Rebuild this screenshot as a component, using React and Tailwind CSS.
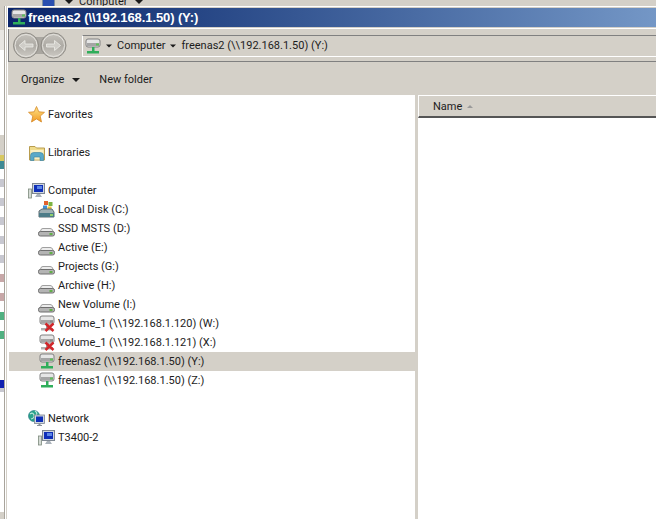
import React from "react";

const ui = "font-['Roboto','Liberation_Sans',sans-serif]";

function DriveIcon() {
  return (
    <svg width="17" height="16" viewBox="0 0 17 16" className="shrink-0 mt-[2px]">
      <path d="M3 8 Q3 6.500 5 6.500 H12 Q14 6.500 14.500 8 L15.500 11 H1.500 Z" fill="#ececec" stroke="#a0a0a0" />
      <rect x="0.500" y="9.500" width="16" height="4.500" rx="1.800" fill="#b4b4b4" stroke="#6f6f6f" />
      <rect x="11.500" y="11" width="3" height="2" fill="#62b04a" />
    </svg>
  );
}

function SystemDriveIcon() {
  return (
    <svg width="17" height="18" viewBox="0 0 17 18" className="shrink-0">
      <rect x="6" y="0" width="4" height="4" fill="#e2622e" />
      <rect x="10.500" y="1" width="4" height="4" fill="#7cb342" />
      <rect x="5" y="4.500" width="4" height="4" fill="#3f8fd6" />
      <rect x="9.500" y="5.500" width="4" height="4" fill="#f2c230" />
      <path d="M1 10 L4 8 H14 L16 11 V16 H1 Z" fill="#9fb0b4" stroke="#5c6a70" />
      <rect x="1" y="12" width="15" height="4" fill="#4d7c88" />
      <rect x="12" y="13" width="3" height="2" fill="#8fd06a" />
    </svg>
  );
}

function NetDriveIcon({ offline }) {
  return (
    <svg width="18" height="17" viewBox="0 0 18 17" className="shrink-0">
      <path d="M2 3 Q2 1 4 1 H14 Q16 1 16 3 V7 Q16 9 14 9 H4 Q2 9 2 7 Z" fill="#e6e6e6" stroke="#808080" />
      <rect x="3" y="5" width="12" height="3" fill="#a5a5a5" />
      <rect x="12" y="5.500" width="3" height="2" fill={offline ? "#8a8a8a" : "#5fbf5a"} />
      <rect x="8" y="9" width="2.500" height="4" fill={offline ? "#9a9a9a" : "#2fae5b"} />
      <rect x="3" y="13" width="12" height="2.500" fill={offline ? "#b0b0b0" : "#2fae5b"} />
      {offline && (
        <path d="M7.500 8.500 L15.500 16 M15.500 8.500 L7.500 16" stroke="#d2262a" strokeWidth="2.400" />
      )}
    </svg>
  );
}

function StarIcon() {
  return (
    <svg width="17" height="17" viewBox="0 0 17 17" className="shrink-0">
      <defs>
        <linearGradient id="star" x1="0" y1="0" x2="0" y2="1">
          <stop offset="0" stopColor="#fde58a" />
          <stop offset="1" stopColor="#f39a22" />
        </linearGradient>
      </defs>
      <path d="M8.500 0.500 L10.800 5.800 L16.500 6.300 L12.200 10.100 L13.500 16 L8.500 12.900 L3.500 16 L4.800 10.100 L0.500 6.300 L6.200 5.800 Z" fill="url(#star)" stroke="#d58a2a" strokeWidth="0.800" />
    </svg>
  );
}

function LibraryIcon() {
  return (
    <svg width="16" height="16" viewBox="0 0 16 16" className="shrink-0">
      <path d="M0.500 1.500 H6 L7.500 3 H15.500 V15 H0.500 Z" fill="#f0dc8c" stroke="#b89c4e" />
      <path d="M1.500 5 H14.500 V14.500 H1.500 Z" fill="#f8efc4" />
      <path d="M1.500 15.500 V10.500 Q1.500 7.500 5 7.500 H11 Q14.500 7.500 14.500 10.500 V15.500 H11 V12 H5 V15.500 Z" fill="#59a8c8" stroke="#357f9e" strokeWidth="0.600" />
    </svg>
  );
}

function ComputerIcon() {
  return (
    <svg width="17" height="16" viewBox="0 0 17 16" className="shrink-0">
      <rect x="0.500" y="6" width="3" height="9" fill="#d5dbd5" stroke="#7d8a7d" strokeWidth="0.800" />
      <rect x="4.500" y="0.500" width="12" height="10" fill="#cfd6df" stroke="#7e8792" />
      <rect x="6" y="2" width="9" height="7" fill="#0f2fb8" />
      <rect x="9" y="3" width="5" height="3" fill="#5c86e6" />
      <path d="M9 11 H12 L14 14 H7 Z" fill="#aab2ba" />
    </svg>
  );
}

function NetworkIcon() {
  return (
    <svg width="17" height="17" viewBox="0 0 17 17" className="shrink-0">
      <circle cx="6" cy="6" r="5.500" fill="#2aa38c" stroke="#1c6f7c" strokeWidth="0.600" />
      <path d="M2 4 Q5 2 6 5 T3 9 M7 1 Q10 3 8 5" fill="none" stroke="#bfe8dc" strokeWidth="1.200" />
      <rect x="6.500" y="5" width="10" height="8.500" fill="#cfd6df" stroke="#7e8792" strokeWidth="0.800" />
      <rect x="8" y="6.500" width="7" height="5.500" fill="#0f2fb8" />
      <path d="M10.500 13.500 H12.500 V15 H14 V16 H9 V15 H10.500 Z" fill="#8a929a" />
    </svg>
  );
}

function Caret({ className }) {
  return <span className={"w-0 h-0 border-x-4 border-x-transparent border-t-4 border-t-[#1a1a1a] " + className} />;
}

function NavButtons() {
  return (
    <svg width="54" height="27" viewBox="0 0 54 27" className="shrink-0">
      <defs>
        <linearGradient id="nav" x1="0" y1="0" x2="0" y2="1">
          <stop offset="0" stopColor="#c6c3bd" />
          <stop offset="0.500" stopColor="#aeaba5" />
          <stop offset="1" stopColor="#cfccc6" />
        </linearGradient>
      </defs>
      <rect x="20" y="5" width="14" height="17" fill="#a9a6a0" />
      <circle cx="13" cy="13.500" r="12.500" fill="url(#nav)" stroke="#8f8c86" />
      <circle cx="13" cy="13.500" r="11" fill="none" stroke="#e6e4df" />
      <circle cx="40.500" cy="13.500" r="12.500" fill="url(#nav)" stroke="#8f8c86" />
      <circle cx="40.500" cy="13.500" r="11" fill="none" stroke="#e6e4df" />
      <path d="M20 12 H12 V8.500 L6 13.500 L12 18.500 V15 H20 Z" fill="#cfcdc8" stroke="#eeede9" strokeWidth="0.800" />
      <path d="M33.500 12 H41.500 V8.500 L47.500 13.500 L41.500 18.500 V15 H33.500 Z" fill="#cfcdc8" stroke="#eeede9" strokeWidth="0.800" />
    </svg>
  );
}

const stripRows = [
  "h-[24px] bg-[#d4d0c8]",
  "h-[20px] bg-[#e8e6e2]",
  "h-[85px] bg-white",
  "h-[20px] bg-[#d4d0c8]",
  "h-[6px] bg-[#d8c860]",
  "h-[8px] bg-[#3f8a94]",
  "h-[10px] bg-white",
  "h-[8px] bg-[#c8c8d0]",
  "h-[11px] bg-white",
  "h-[8px] bg-[#c8c8d0]",
  "h-[11px] bg-white",
  "h-[8px] bg-[#c8c8d0]",
  "h-[11px] bg-white",
  "h-[8px] bg-[#c8c8d0]",
  "h-[11px] bg-white",
  "h-[8px] bg-[#c8c8d0]",
  "h-[11px] bg-white",
  "h-[8px] bg-[#c8a8a8]",
  "h-[11px] bg-white",
  "h-[8px] bg-[#c8a8a8]",
  "h-[11px] bg-white",
  "h-[8px] bg-[#50b080]",
  "h-[11px] bg-white",
  "h-[8px] bg-[#50b080]",
  "h-[41px] bg-white",
  "h-[8px] bg-[#1020b0]",
  "h-[4px] bg-[#c8c8d0]",
  "h-[120px] bg-white",
];

function TreeRow({ icon, label, child, selected }) {
  return (
    <div
      className={
        "h-[19px] flex items-center gap-[3px] " +
        (child ? "pl-[29px] " : "pl-[19px] ") +
        (selected ? "bg-[#d4d0c8]" : "")
      }
    >
      <span className="w-[17px] flex justify-center shrink-0">{icon}</span>
      <span className="whitespace-nowrap pt-[2px]">{label}</span>
    </div>
  );
}

export default function App() {
  return (
    <div className={"w-[656px] h-[519px] overflow-hidden flex flex-col bg-[#d4d0c8] text-[#1c1c1c] text-[11px] " + ui}>
      {/* window behind this one */}
      <div className="h-[6px] shrink-0 overflow-hidden">
        <div className="-mt-[5px] h-[14px] flex items-center pl-[42px]">
          <span className="w-[13px] h-[12px] bg-[#2a4fb0] border border-[#8090a0]" />
          <Caret className="ml-[10px]" />
          <span className="ml-[6px]">Computer</span>
          <Caret className="ml-[8px]" />
        </div>
      </div>

      <div className="flex-1 flex min-h-0">
        <div className="w-[4px] shrink-0 flex flex-col overflow-hidden">
          {stripRows.map((row, i) => (
            <div key={i} className={"shrink-0 " + row} />
          ))}
        </div>
        <div className="w-px bg-[#a8a49c] shrink-0" />
        <div className="w-px bg-white shrink-0" />
        <div className="w-px bg-[#d4d0c8] shrink-0" />
        <div className="w-px bg-white shrink-0" />

        {/* explorer window */}
        <div className="flex-1 min-w-0 flex flex-col">
          <div className="h-px bg-white shrink-0" />
          <div className="h-px shrink-0" />
          <div className="h-[19px] shrink-0 flex items-center pl-[2px] bg-gradient-to-r from-[#0a246a] to-[#7497c6]">
            <NetDriveIcon />
            <span className="text-white font-bold text-[13px] tracking-[-0.1px] font-['Liberation_Sans',sans-serif] whitespace-nowrap">
              freenas2 (\\192.168.1.50) (Y:)
            </span>
          </div>
          <div className="h-px shrink-0" />
          <div className="h-px bg-white shrink-0" />

          {/* address bar */}
          <div className="h-[33px] shrink-0 flex border-l border-b border-[#808080]">
            <div className="flex items-start pl-[4px] pt-[3px] w-[73px] shrink-0">
              <NavButtons />
            </div>
            <div className="flex-1 h-[22px] mt-[6px] flex items-center border-t border-b border-t-[#808080] border-b-white border-l border-l-white pl-[1px]">
              <NetDriveIcon />
              <Caret className="ml-[3px] scale-75" />
              <span className="ml-[4px]">Computer</span>
              <Caret className="ml-[4px] scale-75" />
              <span className="ml-[4px] whitespace-nowrap">freenas2 (\\192.168.1.50) (Y:)</span>
            </div>
          </div>

          {/* command bar */}
          <div className="h-[33px] shrink-0 flex items-center pl-[13px] pt-[3px]">
            <span>Organize</span>
            <Caret className="ml-[8px]" />
            <span className="ml-[19px]">New folder</span>
          </div>

          <div className="flex-1 min-h-0 flex">
            {/* navigation tree */}
            <div className="w-[407px] shrink-0 bg-white pt-[10px] pl-px">
              <TreeRow icon={<StarIcon />} label="Favorites" />
              <div className="h-[19px]" />
              <TreeRow icon={<LibraryIcon />} label="Libraries" />
              <div className="h-[19px]" />
              <TreeRow icon={<ComputerIcon />} label="Computer" />
              <TreeRow child icon={<SystemDriveIcon />} label="Local Disk (C:)" />
              <TreeRow child icon={<DriveIcon />} label="SSD MSTS (D:)" />
              <TreeRow child icon={<DriveIcon />} label="Active (E:)" />
              <TreeRow child icon={<DriveIcon />} label="Projects (G:)" />
              <TreeRow child icon={<DriveIcon />} label="Archive (H:)" />
              <TreeRow child icon={<DriveIcon />} label="New Volume (I:)" />
              <TreeRow child icon={<NetDriveIcon offline />} label="Volume_1 (\\192.168.1.120) (W:)" />
              <TreeRow child icon={<NetDriveIcon offline />} label="Volume_1 (\\192.168.1.121) (X:)" />
              <TreeRow child selected icon={<NetDriveIcon />} label="freenas2 (\\192.168.1.50) (Y:)" />
              <TreeRow child icon={<NetDriveIcon />} label="freenas1 (\\192.168.1.50) (Z:)" />
              <div className="h-[19px]" />
              <TreeRow icon={<NetworkIcon />} label="Network" />
              <TreeRow child icon={<ComputerIcon />} label="T3400-2" />
            </div>
            <div className="w-[3px] shrink-0" />

            {/* file list */}
            <div className="flex-1 min-w-0 bg-white">
              <div className="h-[23px] flex items-center pl-[14px] pt-[2px] bg-[#d4d0c8] border-t border-l border-t-white border-l-white border-b-2 border-b-[#555555]">
                <span>Name</span>
                <span className="ml-[5px] mb-[2px] w-0 h-0 border-x-[3px] border-x-transparent border-b-[3px] border-b-[#9a9a9a]" />
              </div>
            </div>
          </div>
        </div>
      </div>
    </div>
  );
}
